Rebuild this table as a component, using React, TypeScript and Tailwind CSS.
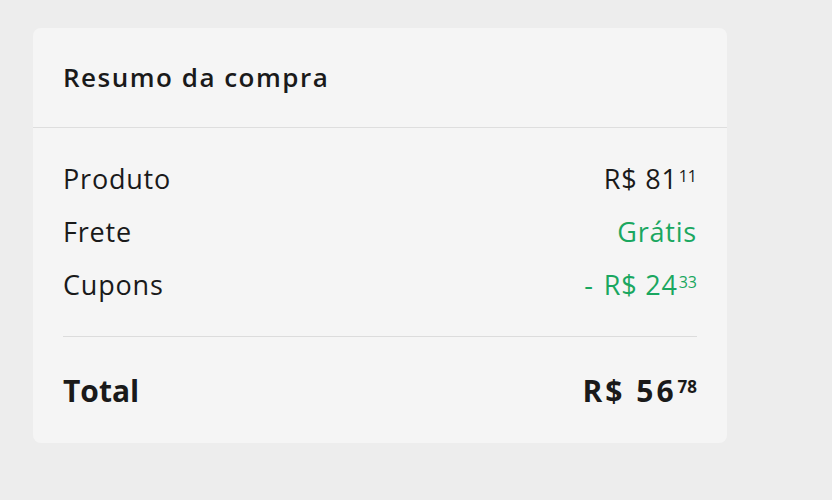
import React from 'react';

type Money = { reais: string; cents: string };

function Price({
  value,
  prefix,
  className,
  centsClass,
}: {
  value: Money;
  prefix?: string;
  className?: string;
  centsClass?: string;
}) {
  return (
    <span className={`flex items-start ${className ?? ''}`}>
      {prefix && <span className="mr-[10px]">{prefix}</span>}
      <span>R$ {value.reais}</span>
      <span className={`ml-[1px] leading-none tracking-normal ${centsClass ?? 'text-[16px] mt-[9px]'}`}>{value.cents}</span>
    </span>
  );
}

export default function App() {
  return (
    <div className="w-[832px] h-[500px] bg-[#ededed] pt-[28px] pl-[33px] font-['Open_Sans','Liberation_Sans',sans-serif] text-[#1a1a1a]">
      <div className="w-[694px] h-[415px] bg-[#f5f5f5] rounded-[8px] flex flex-col">
        {/* header */}
        <div className="h-[100px] flex items-center px-[30px] border-b border-[#dedede]">
          <h2 className="text-[26px] font-semibold tracking-[1.5px]">Resumo da compra</h2>
        </div>

        {/* rows */}
        <div className="px-[30px] pt-[25px]">
          <div className="flex justify-between items-center h-[53px] text-[27px] tracking-[0.8px]">
            <span>Produto</span>
            <Price value={{ reais: '81', cents: '11' }} />
          </div>
          <div className="flex justify-between items-center h-[53px] text-[27px] tracking-[0.8px]">
            <span>Frete</span>
            <span className="text-[#1aa760]">Grátis</span>
          </div>
          <div className="flex justify-between items-center h-[53px] text-[27px] tracking-[0.8px]">
            <span>Cupons</span>
            <Price value={{ reais: '24', cents: '33' }} prefix="-" className="text-[#1aa760]" />
          </div>

          <div className="mt-[24px] border-t border-[#dcdcdc]" />

          <div className="flex justify-between items-center h-[106px] text-[30px] font-bold">
            <span>Total</span>
            <Price
              value={{ reais: '56', cents: '78' }}
              className="tracking-[3px]"
              centsClass="text-[17px] mt-[10px]"
            />
          </div>
        </div>
      </div>
    </div>
  );
}
